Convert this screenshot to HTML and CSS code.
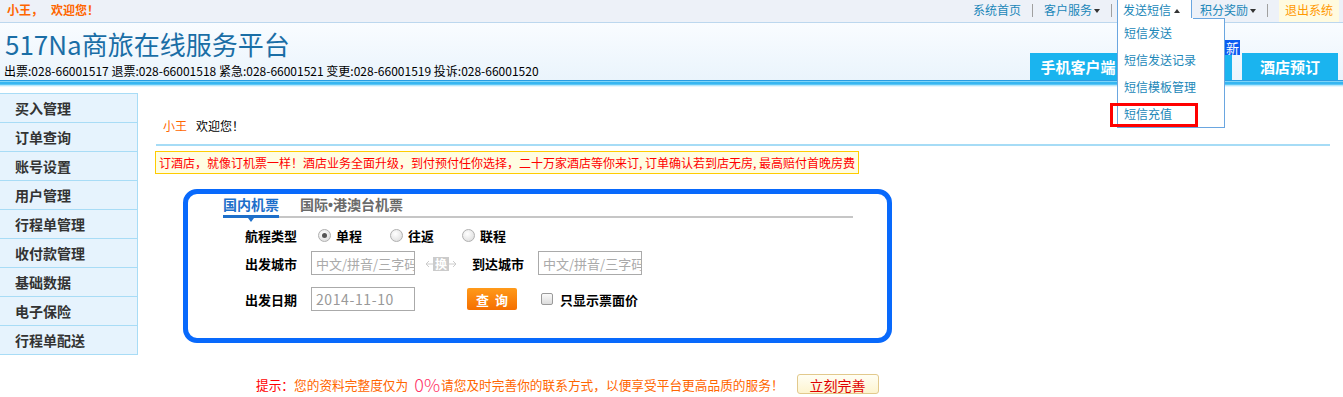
FILE: index.html
```html
<!DOCTYPE html>
<html lang="zh-CN">
<head>
    <meta charset="UTF-8">
    <title>517Na商旅在线服务平台</title>
    <link rel="stylesheet" href="styles.css">
</head>
<body>
    <div class="topbar">
        <div class="hello">小王，<span class="hello-gap">欢迎您！</span></div>
        <ul class="nav">
            <li class="nav-item first"><a href="#">系统首页</a></li>
            <li class="sep"></li>
            <li class="nav-item"><a href="#">客户服务<i class="tri down"></i></a></li>
            <li class="sep"></li>
            <li class="nav-item drop">
                <a href="#">发送短信<i class="tri up"></i></a>
                <!-- 下拉菜单 -->
                <div class="menu">
                    <a href="#">短信发送</a>
                    <a href="#">短信发送记录</a>
                    <a href="#">短信模板管理</a>
                    <a href="#">短信充值</a>
                    <span class="mark"></span>
                </div>
            </li>
            <li class="nav-item after-drop"><a href="#">积分奖励<i class="tri down"></i></a></li>
            <li class="sep"></li>
            <li class="nav-item exit"><a href="#">退出系统</a></li>
        </ul>
    </div>

    <div class="header">
        <div class="brand">
            <h1>517Na商旅在线服务平台</h1>
            <p class="phones">出票:028-66001517 退票:028-66001518 紧急:028-66001521 变更:028-66001519 投诉:028-66001520</p>
        </div>
        <div class="tabs">
            <a class="tab" href="#">手机客户端</a>
            <a class="tab" href="#"><span class="badge">新</span></a>
            <a class="tab" href="#">酒店预订</a>
        </div>
    </div>
    <div class="stripe"></div>

    <div class="page">
        <ul class="sidebar">
            <li>买入管理</li>
            <li>订单查询</li>
            <li>账号设置</li>
            <li>用户管理</li>
            <li>行程单管理</li>
            <li>收付款管理</li>
            <li>基础数据</li>
            <li>电子保险</li>
            <li>行程单配送</li>
        </ul>

        <div class="main">
            <div class="welcome"><span class="name">小王</span>欢迎您！</div>
            <div class="rule"></div>
            <div class="notice">订酒店，就像订机票一样！酒店业务全面升级，到付预付任你选择，二十万家酒店等你来订, 订单确认若到店无房, 最高赔付首晚房费</div>

            <div class="search">
                <div class="search-tabs">
                    <span class="stab active">国内机票</span>
                    <span class="stab">国际<span class="dot">•</span>港澳台机票</span>
                </div>
                <div class="row r1">
                    <label class="lbl">航程类型</label>
                    <span class="opt"><i class="radio checked"></i>单程</span>
                    <span class="opt"><i class="radio"></i>往返</span>
                    <span class="opt"><i class="radio"></i>联程</span>
                </div>
                <div class="row r2">
                    <label class="lbl">出发城市</label>
                    <input class="field" type="text" placeholder="中文/拼音/三字码">
                    <span class="swap">
                        <svg width="32" height="14" viewBox="0 0 32 14">
                            <path d="M1 7H31M4 4L1 7L4 10M28 4L31 7L28 10" fill="none" stroke="#ccc" stroke-width="1"/>
                        </svg>
                        <b>换</b>
                    </span>
                    <label class="lbl">到达城市</label>
                    <input class="field" type="text" placeholder="中文/拼音/三字码">
                </div>
                <div class="row r3">
                    <label class="lbl">出发日期</label>
                    <input class="field date" type="text" value="2014-11-10">
                    <button class="go" type="button">查 询</button>
                    <i class="check"></i>
                    <span class="check-lbl">只显示票面价</span>
                </div>
            </div>

            <div class="tip">
                <span class="tip-head">提示：</span>您的资料完整度仅为<span class="pct">0%</span>请您及时完善你的联系方式，以便享受平台更高品质的服务！
                <button class="fill" type="button">立刻完善</button>
            </div>
        </div>
    </div>
</body>
</html>
```

FILE: styles.css
```css
* {
    box-sizing: border-box;
}
body {
    margin: 0;
    font-family: "Noto Sans CJK SC", sans-serif;
    font-size: 12px;
    color: #000;
    background: #fff;
}
ul {
    list-style: none;
    margin: 0;
    padding: 0;
}
a {
    text-decoration: none;
}

/* 顶部条 */
.topbar {
    height: 23px;
    background: #edf1f8;
    border-bottom: 1px solid #bcd7ee;
    display: flex;
    justify-content: space-between;
    position: relative;
    z-index: 5;
}
.hello {
    color: #ff6600;
    font-weight: bold;
    padding-left: 7px;
    line-height: 20px;
}
.hello-gap {
    margin-left: 8px;
}
.nav {
    display: flex;
    margin-right: 4px;
    height: 22px;
}
.nav-item {
    line-height: 20px;
    padding: 0 11px;
    position: relative;
}
.nav-item a {
    color: #1b87b8;
}
.nav-item.first {
    padding-left: 0;
}
.sep {
    width: 1px;
    height: 13px;
    margin-top: 4px;
    background: #a0a0a0;
}
.tri {
    display: inline-block;
    width: 0;
    height: 0;
    margin-left: 2px;
    border-left: 3.5px solid transparent;
    border-right: 3.5px solid transparent;
    vertical-align: 2px;
}
.tri.down {
    border-top: 4px solid #333;
}
.tri.up {
    border-bottom: 4px solid #333;
    margin-left: 3px;
}
.drop {
    margin-left: 5px;
    padding: 0 11px 0 5px;
    height: 18px;
    background: #fff;
    border-left: 1px solid #6aa6e0;
    border-right: 1px solid #6aa6e0;
}
.after-drop {
    padding-left: 8px;
}
.menu {
    position: absolute;
    top: 18px;
    left: -1px;
    width: 108px;
    padding-top: 1px;
    background: #fff;
    border: 1px solid #6aa6e0;
    border-top: none;
}
.menu::before {
    content: "";
    position: absolute;
    top: 0;
    left: 75px;
    right: 0;
    height: 1px;
    background: #6aa6e0;
}
.menu a {
    display: block;
    height: 27px;
    line-height: 27px;
    padding-left: 6px;
    color: #1b87b8;
}
.menu .mark {
    position: absolute;
    left: -8px;
    top: 85px;
    width: 88px;
    height: 24px;
    border: 3px solid #ff0000;
}
.exit {
    margin-left: 11px;
    padding: 0 6px;
    background: #fffbe0;
}
.exit a {
    color: #ff9900;
}

/* 页头 */
.header {
    height: 57px;
    background: linear-gradient(#f9fcff, #eaf4fc);
    display: flex;
    justify-content: space-between;
    align-items: flex-end;
}
.brand h1 {
    margin: 0;
    padding: 5px 0 0 5px;
    font-size: 26px;
    font-weight: normal;
    line-height: 32px;
    color: #1a6ea6;
}
.phones {
    margin: 4px 0 2px 4px;
    line-height: 14px;
}
.tabs {
    display: flex;
    gap: 10px;
    margin-right: 5px;
}
.tab {
    position: relative;
    width: 96px;
    height: 27px;
    line-height: 27px;
    text-align: center;
    background: #1ab4ef;
    color: #fff;
    font-size: 15px;
    font-weight: bold;
}
.badge {
    position: absolute;
    top: -13px;
    right: -8px;
    height: 15px;
    padding: 0 1px;
    line-height: 15px;
    font-size: 13px;
    font-weight: normal;
    background: #0a5cf2;
    color: #fff;
}
.stripe {
    height: 7px;
    background: linear-gradient(#2a9de2 0 1px, #7ed4f8 1px 2px, #36b6f1 2px 4px, #5cc6f5 4px 5px, #b8e8fc 5px 6px, #e6f6fe 6px 7px);
}

/* 主体 */
.page {
    display: flex;
    align-items: flex-start;
}
.sidebar {
    width: 138px;
    margin-top: 6px;
    border-top: 1px solid #a8dcf6;
    border-right: 1px solid #a8dcf6;
}
.sidebar li {
    height: 29px;
    line-height: 28px;
    padding-left: 15px;
    background: #e6f3fd;
    border-bottom: 1px solid #a8dcf6;
    color: #333;
    font-size: 14px;
    font-weight: bold;
}
.main {
    flex: 1;
    padding: 30px 13px 0 17px;
}
.welcome {
    margin-left: 8px;
    line-height: 18px;
}
.welcome .name {
    color: #ff6600;
    margin-right: 9px;
}
.rule {
    height: 2px;
    margin: 9px 0 0 1px;
    background: #a6dcf6;
}
.notice {
    display: inline-block;
    margin-top: 5px;
    height: 23px;
    line-height: 21px;
    padding: 0 3px;
    border: 1px solid #ffcc00;
    background: #fffde2;
    color: #ff0000;
}

/* 机票搜索 */
.search {
    width: 709px;
    height: 154px;
    margin: 15px 0 0 28px;
    border: 5px solid #0869fc;
    border-radius: 14px;
}
.search-tabs {
    display: flex;
    width: 630px;
    height: 24px;
    margin-left: 35px;
    border-bottom: 2px solid #c6c6c6;
}
.stab {
    position: relative;
    height: 22px;
    line-height: 20px;
    margin-right: 21px;
    font-size: 14px;
    font-weight: bold;
    color: #6a6a6a;
}
.stab .dot {
    font-family: "Liberation Sans", sans-serif;
}
.stab.active {
    color: #1d6fca;
}
.stab.active::after {
    content: "";
    position: absolute;
    left: 0;
    right: 0;
    bottom: -2px;
    height: 3px;
    background: #1d6fca;
}
.stab.active::before {
    content: "";
    position: absolute;
    left: 50%;
    margin-left: -3px;
    bottom: -6px;
    border-left: 3px solid transparent;
    border-right: 3px solid transparent;
    border-top: 4px solid #1d6fca;
}
.row {
    display: flex;
    align-items: center;
    padding-left: 57px;
}
.r1 {
    height: 26px;
    margin-top: 4px;
}
.r2 {
    height: 24px;
    margin-top: 3px;
}
.r3 {
    height: 24px;
    margin-top: 12px;
}
.lbl {
    width: 66px;
    font-size: 13px;
    font-weight: bold;
}
.opt {
    display: flex;
    align-items: center;
    margin-right: 28px;
    font-size: 13px;
    font-weight: bold;
}
.radio {
    position: relative;
    width: 13px;
    height: 13px;
    margin: 0 5px 0 0;
    border: 1px solid #b0b0b0;
    border-radius: 50%;
    background: radial-gradient(circle at 40% 35%, #fff, #d8d8d8);
}
.r1 .opt:first-of-type .radio {
    margin-left: 7px;
}
.radio.checked::after {
    content: "";
    position: absolute;
    left: 3px;
    top: 3px;
    width: 5px;
    height: 5px;
    border-radius: 50%;
    background: #555;
}
.field {
    width: 104px;
    height: 24px;
    padding: 0 0 0 4px;
    border: 1px solid #aaa;
    font-family: inherit;
    font-size: 13px;
    color: #999;
    outline: none;
}
.field::placeholder {
    color: #aaa;
}
.field.date {
    font-size: 14px;
    letter-spacing: 0.6px;
}
.swap {
    position: relative;
    width: 32px;
    height: 14px;
    margin: 2px 15px 0 10px;
}
.swap svg {
    display: block;
}
.swap b {
    position: absolute;
    left: 8px;
    top: 0;
    width: 16px;
    height: 14px;
    line-height: 14px;
    text-align: center;
    font-size: 12px;
    background: #cbcbcb;
    color: #fff;
}
.go {
    width: 50px;
    height: 22px;
    margin-left: 52px;
    padding: 0;
    border: none;
    border-radius: 2px;
    background: linear-gradient(#ff9a1a, #f56f00);
    color: #fff;
    font-family: inherit;
    font-size: 13px;
    font-weight: bold;
    word-spacing: 3px;
}
.check {
    width: 12px;
    height: 12px;
    margin-left: 24px;
    border: 1px solid #9a9a9a;
    border-radius: 2px;
    background: linear-gradient(#fafafa, #dcdcdc);
}
.check-lbl {
    margin-left: 7px;
    font-size: 13px;
    font-weight: bold;
}

/* 提示 */
.tip {
    display: flex;
    align-items: center;
    height: 20px;
    margin: 31px 0 0 101px;
    font-size: 12.7px;
    color: #ff6600;
}
.tip-head {
    color: #ff0000;
}
.pct {
    margin: 0 1px 0 6px;
    font-size: 18px;
    font-weight: 300;
    color: #ff3366;
}
.fill {
    width: 82px;
    height: 20px;
    margin-left: 13px;
    padding: 0;
    border: 1px solid #e2c98c;
    border-radius: 3px;
    background: linear-gradient(#fffef4, #fdf4cf);
    color: #e00000;
    font-family: inherit;
    font-size: 14px;
}
```
